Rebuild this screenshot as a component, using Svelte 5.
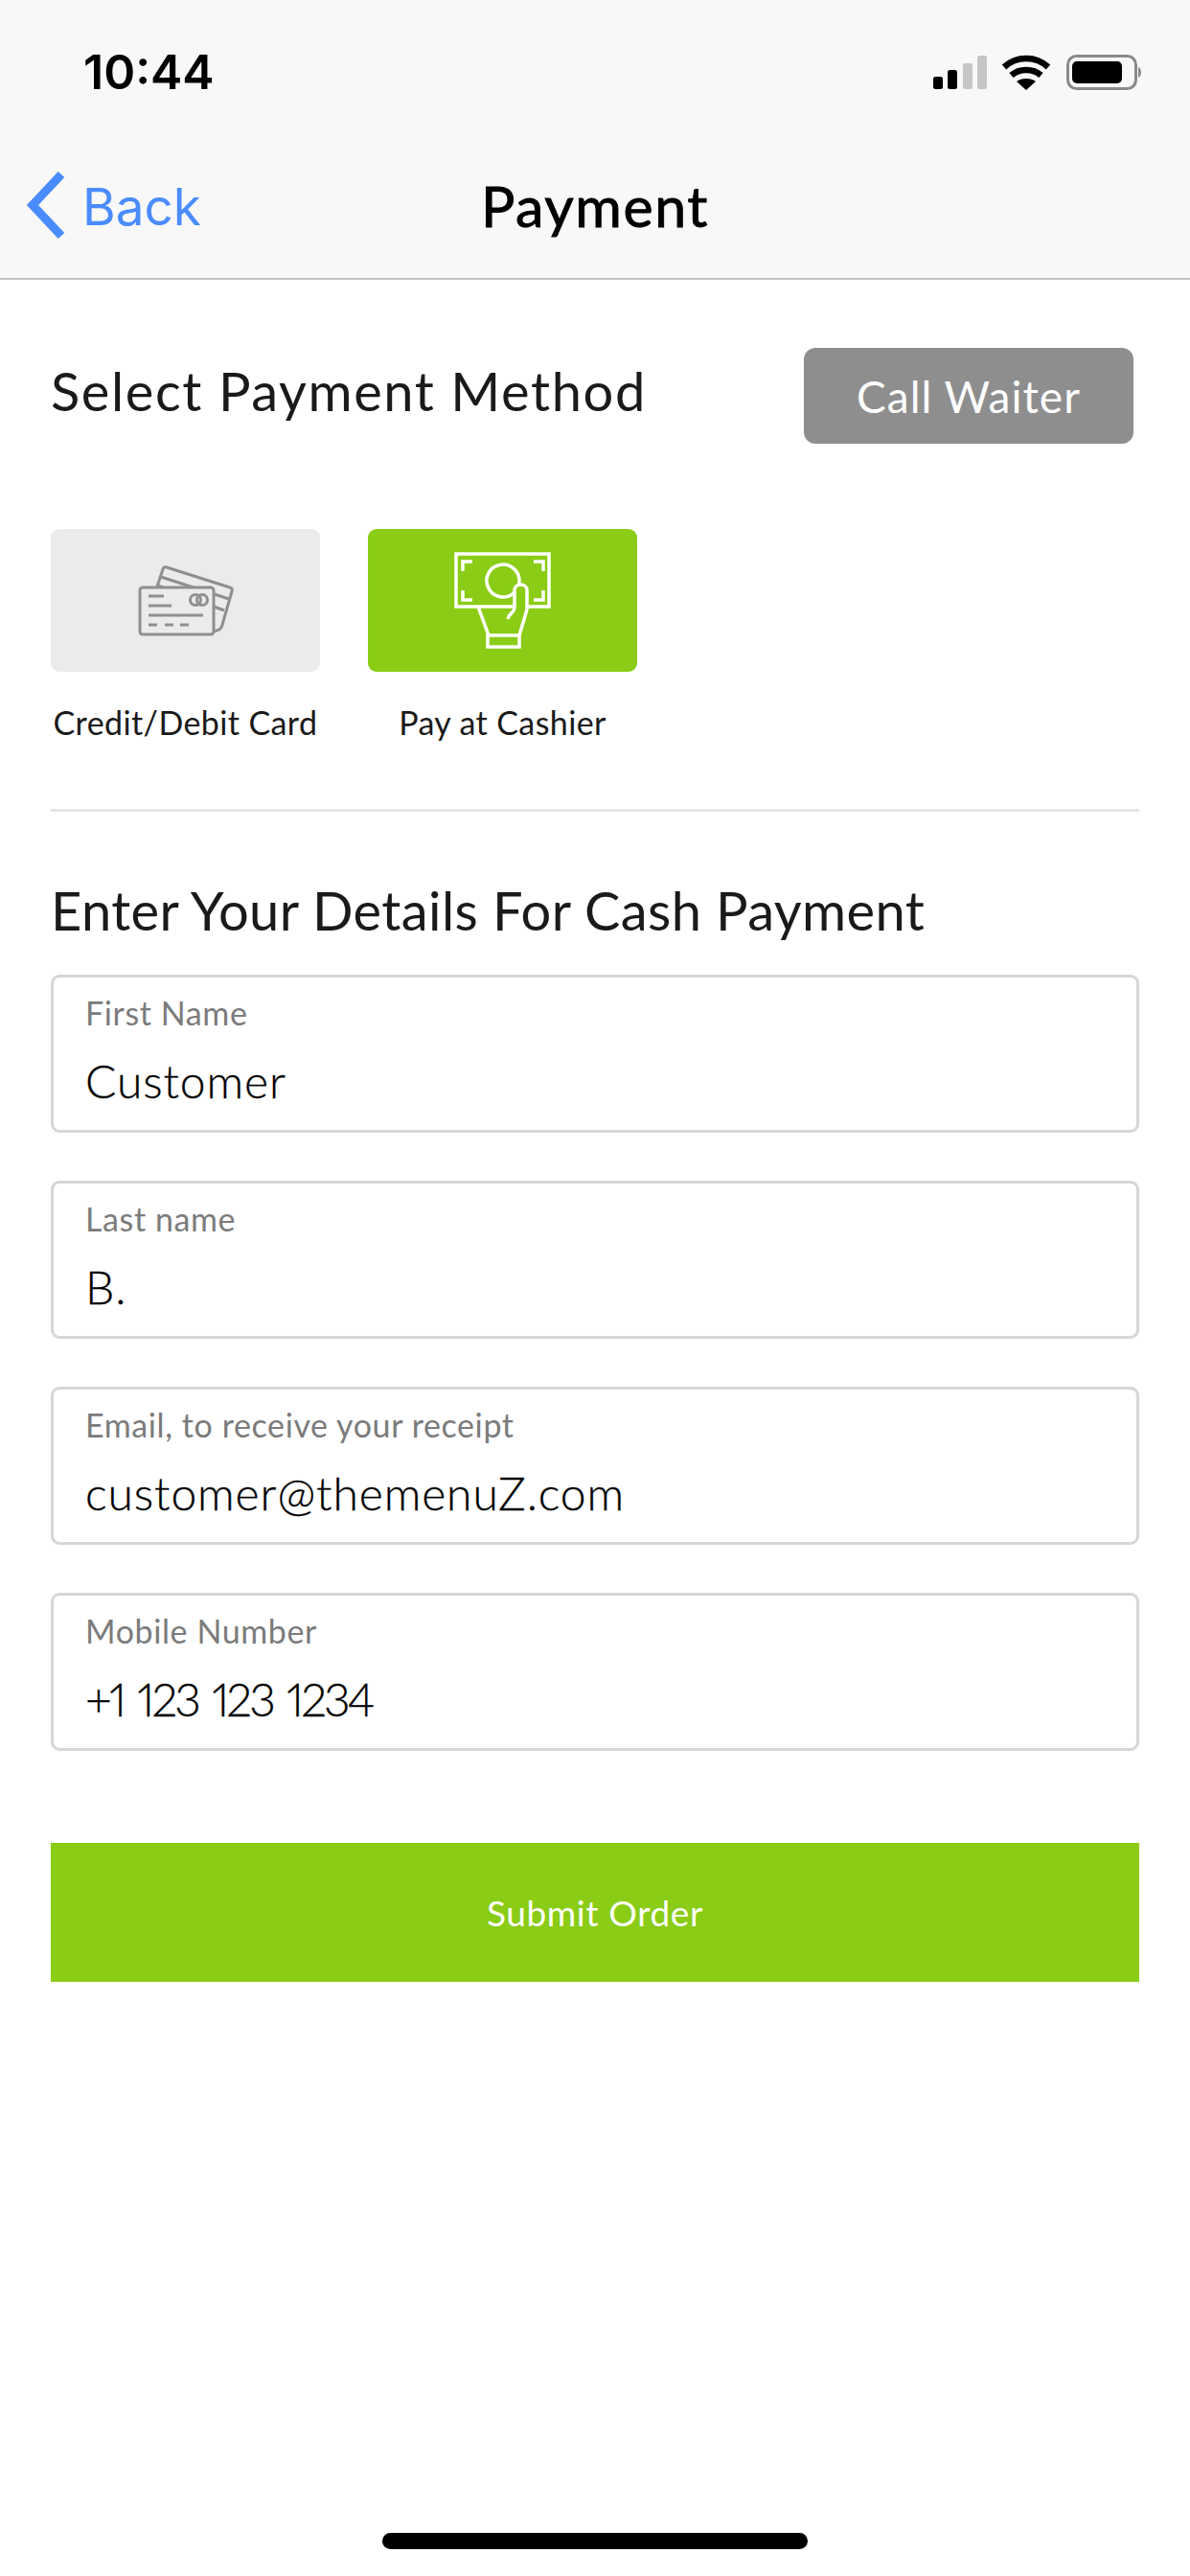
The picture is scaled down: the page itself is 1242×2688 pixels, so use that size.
<script>
  const fields = [
    { label: 'First Name', value: 'Customer', cls: '' },
    { label: 'Last name', value: 'B.', cls: '' },
    { label: 'Email, to receive your receipt', value: 'customer@themenuZ.com', cls: '' },
    { label: 'Mobile Number', value: '+1 123 123 1234', cls: 'digits' }
  ];
</script>

<div class="screen">
  <header class="top">
    <div class="status">
      <span class="time">10:44</span>
      <svg class="status-icons" width="220" height="40" viewBox="0 0 220 40">
        <g fill="#000">
          <rect x="0" y="24" width="10" height="13" rx="2.5" />
          <rect x="15" y="17" width="10" height="20" rx="2.5" />
          <rect x="31" y="10" width="10" height="27" rx="2.5" fill="#c6c6c6" />
          <rect x="46" y="2" width="10" height="35" rx="2.5" fill="#c6c6c6" />
          <path d="M74 14 C87 2 107 2 120 14" fill="none" stroke="#000" stroke-width="6.5" />
          <path d="M81.500 22.500 C90 15 104 15 112.500 22.500" fill="none" stroke="#000" stroke-width="6.500" />
          <path d="M87 29 C92 25 102 25 107 29 L97 38 Z" />
          <rect x="140.500" y="2.500" width="71" height="34" rx="9" fill="none" stroke="#8a8a8a" stroke-width="3" />
          <rect x="145" y="8" width="52" height="23" rx="5" />
          <path d="M214 14 C218 15 218 24 214 25 Z" fill="#8a8a8a" />
        </g>
      </svg>
    </div>
    <nav class="nav">
      <a class="back" href="#back">
        <svg width="44" height="72" viewBox="0 0 44 72">
          <path d="M39 4 L9 36 L39 68" fill="none" stroke="#4a8cff" stroke-width="9" />
        </svg>
        <span>Back</span>
      </a>
      <h1>Payment</h1>
    </nav>
  </header>

  <main class="content">
    <div class="method-head">
      <h2>Select Payment Method</h2>
      <button class="waiter">Call Waiter</button>
    </div>

    <div class="methods">
      <div class="method">
        <div class="tile grey">
          <svg width="100" height="76" viewBox="0 0 100 76" fill="none" stroke="#8f8f8f" stroke-width="3" stroke-linejoin="round">
            <path d="M20 23 L26 5 Q27 2 30 3 L96 24 Q99 25 98 28 L88 63 Q87 68 82 69 L80 70" />
            <path d="M24 13 L95 36 M21 22 L90 48" />
            <rect x="2" y="24" width="77" height="49" rx="3" fill="#ebebeb" />
            <path d="M11 33 H27 M11 43 H35 M11 53 H68 M11 63 H20 M28 63 H37 M44 63 H53" />
            <circle cx="60" cy="37" r="5.500" />
            <circle cx="67" cy="37" r="5.500" />
          </svg>
        </div>
        <span>Credit/Debit Card</span>
      </div>
      <div class="method">
        <div class="tile green">
          <svg width="101" height="102" viewBox="-2 -2 101 102" fill="none" stroke="#fff" stroke-width="3.500">
            <path d="M61 55 H0 V0 H97 V55 H74" />
            <path d="M17 8 H7 V18 M81 8 H91 V18 M7 38 V48 H17 M91 38 V48 H81" />
            <path d="M65.700 31 A17 17 0 1 0 61 40" />
            <path d="M61 57 V38 C61 30 74 30 74 38 V58 L66 85 M23 55 L34 85" />
            <path d="M61 57 C60 62 55 62 54 68" />
            <path d="M33 85 H66 V97 H33 Z" />
          </svg>
        </div>
        <span>Pay at Cashier</span>
      </div>
    </div>

    <hr />

    <h2 class="details">Enter Your Details For Cash Payment</h2>

    <div class="fields">
      {#each fields as f}
        <div class="field">
          <label for={f.label}>{f.label}</label>
          <input id={f.label} class={f.cls} value={f.value} />
        </div>
      {/each}
    </div>

    <button class="submit">Submit Order</button>
  </main>

  <div class="home"></div>
</div>

<style>
  :global(body) { margin: 0; background: #fff; }
  .screen {
    position: relative;
    width: 1242px;
    height: 2688px;
    overflow: hidden;
    background: #fff;
    font-family: "Lato", "Noto Sans", sans-serif;
    color: #1a1a1a;
  }
  .top {
    height: 292px;
    box-sizing: border-box;
    background: #f8f8f8;
    border-bottom: 2px solid #c4c4c4;
  }
  .status {
    height: 150px;
    box-sizing: border-box;
    padding: 50px 48px 0 87px;
    display: flex;
    justify-content: space-between;
    align-items: flex-start;
  }
  .time {
    font-family: "Inter", sans-serif;
    font-weight: 600;
    font-size: 50px;
    line-height: 50px;
    color: #000;
  }
  .status-icons { margin-top: 6px; }
  .nav {
    position: relative;
    height: 140px;
    display: flex;
    align-items: center;
    justify-content: center;
  }
  .back {
    position: absolute;
    left: 25px;
    top: 28px;
    display: flex;
    align-items: center;
    gap: 17px;
    color: #4a8cff;
    text-decoration: none;
    font-size: 53px;
    font-family: "Inter", sans-serif;
    font-weight: 400;
  }
  .back span { margin-top: 4px; }
  h1 {
    margin: 0 0 12px;
    font-size: 59px;
    font-weight: 400;
    -webkit-text-stroke: 0.9px #000;
    color: #000;
    letter-spacing: 1.6px;
  }
  .content { padding: 0 53px; }
  .method-head {
    display: flex;
    justify-content: space-between;
    padding: 71px 6px 0 0;
    height: 189px;
    box-sizing: border-box;
    align-items: flex-start;
    margin-bottom: 71px;
  }
  h2 {
    margin: 0;
    font-size: 56px;
    font-weight: 400;
    letter-spacing: 1.6px;
    line-height: 74px;
  }
  .method-head h2 { margin-top: 8px; }
  .waiter {
    width: 344px;
    height: 100px;
    border: 0;
    border-radius: 12px;
    background: #8e8e8e;
    color: #fff;
    font: 400 46px "Lato", sans-serif;
    letter-spacing: 1px;
  }
  .methods { display: flex; gap: 50px; }
  .method {
    width: 281px;
    display: flex;
    flex-direction: column;
    align-items: center;
    font-size: 34px;
    letter-spacing: 0.4px;
    white-space: nowrap;
  }
  .tile {
    width: 281px;
    height: 149px;
    border-radius: 9px;
    margin-bottom: 32px;
    display: flex;
    align-items: center;
    justify-content: center;
  }
  .method span { line-height: 42px; }
  .grey { background: #ebebeb; }
  .green { background: #8acc16; }
  hr {
    border: 0;
    height: 3px;
    background: #e4e4e4;
    margin: 69px 0 0;
  }
  h2.details { margin-top: 66px; letter-spacing: 0.4px; }
  .fields {
    display: flex;
    flex-direction: column;
    gap: 50px;
    margin-top: 30px;
  }
  .field {
    height: 165px;
    box-sizing: border-box;
    border: 3px solid #d6d6d6;
    border-radius: 9px;
    padding: 17px 33px 0;
    display: flex;
    flex-direction: column;
  }
  label {
    font-size: 34px;
    line-height: 40px;
    color: #7b7b7b;
    letter-spacing: 0.6px;
  }
  input {
    border: 0;
    outline: 0;
    padding: 0;
    margin-top: 21px;
    font: 300 48px/60px "Lato", sans-serif;
    letter-spacing: 0.9px;
    -webkit-text-stroke: 0.3px #000;
    color: #000;
    background: transparent;
    width: 100%;
  }
  input.digits {
    font-variant-numeric: proportional-nums;
    letter-spacing: -2.9px;
    word-spacing: 4px;
  }
  .submit {
    display: block;
    width: 100%;
    height: 145px;
    margin-top: 96px;
    border: 0;
    background: #8acc16;
    color: #fff;
    font: 400 37px "Lato", sans-serif;
    letter-spacing: 0.6px;
  }
  .home {
    position: absolute;
    left: 399px;
    top: 2643px;
    width: 444px;
    height: 17px;
    border-radius: 9px;
    background: #000;
  }
</style>
